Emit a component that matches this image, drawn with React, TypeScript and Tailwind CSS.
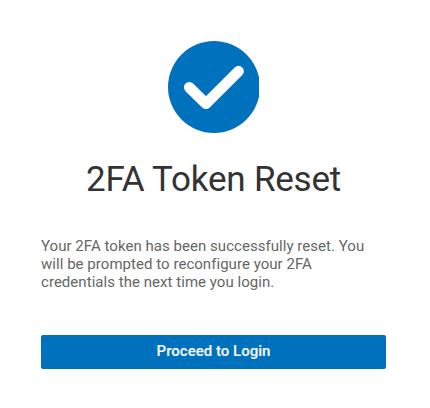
export default function App() {
  return (
    <main className="flex h-[408px] w-[430px] flex-col bg-white px-[41px] pt-[41px] font-['Roboto',sans-serif]">
      <svg className="ml-[127px] h-[92px] w-[91px] shrink-0" viewBox="0 0 91 92" aria-hidden="true">
        <circle cx="46" cy="46" r="46" fill="#0072bd" />
        <path d="M21.300 46.300 L37.900 62.700 L70.500 30.200" fill="none" stroke="#fff" strokeWidth="10.800" strokeLinecap="round" strokeLinejoin="round" />
      </svg>
      <h1 className="mt-[25px] h-[44px] w-[345px] shrink-0 text-center text-[35px] leading-[44px] font-normal tracking-[-0.22px] whitespace-nowrap text-[#333]">2FA Token Reset</h1>
      <p className="mt-[35px] w-[345px] shrink-0 text-[15px] leading-[18px] tracking-[0.04px] text-[#666]">
        Your 2FA token has been successfully reset. You<br />
        will be prompted to reconfigure your 2FA<br />
        credentials the next time you login.
      </p>
      <button className="mt-[44px] h-[34px] w-[345px] shrink-0 rounded-[2px] bg-[#0072bd] pb-[2px] text-[15px] leading-[32px] font-semibold text-[#f5f5f5]">Proceed to Login</button>
    </main>
  );
}
